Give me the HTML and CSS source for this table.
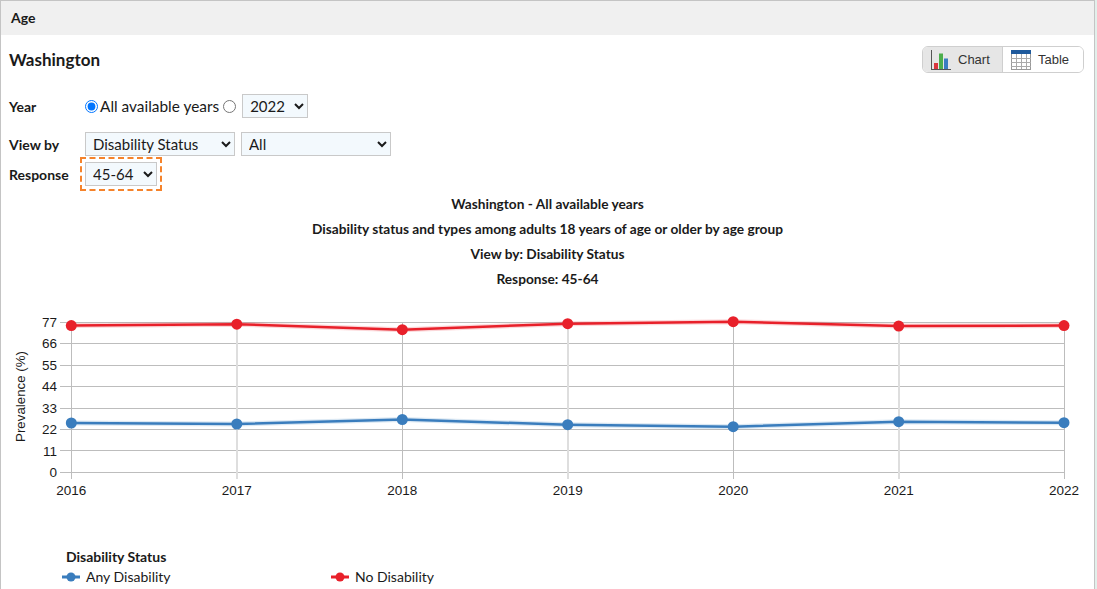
FILE: index.html
```html
<!DOCTYPE html>
<html lang="en">
<head>
<meta charset="utf-8">
<title>Age - Washington</title>
<link rel="stylesheet" href="styles.css">
</head>
<body>
<div class="panel">
  <div class="panel-head">Age</div>
  <div class="panel-body">
    <div class="title-row">
      <h2 class="loc">Washington</h2>
      <div class="toggle">
        <div class="tg active">
          <svg class="tg-icon" width="20" height="20" viewBox="0 0 20 20">
            <rect x="3" y="13" width="4" height="6" fill="#d9363e"/>
            <rect x="8" y="3.5" width="4" height="15.5" fill="#4cae4c"/>
            <rect x="13" y="8.5" width="4" height="10.5" fill="#3b7dc0"/>
            <line x1="0.5" y1="0" x2="0.5" y2="19.5" stroke="#555" stroke-width="1"/>
            <line x1="0" y1="19.5" x2="20" y2="19.5" stroke="#555" stroke-width="1"/>
          </svg>
          <span>Chart</span>
        </div>
        <div class="tg">
          <svg class="tg-icon" width="20" height="20" viewBox="0 0 20 20">
            <rect x="0.5" y="0.5" width="19" height="19" fill="#fff" stroke="#999"/>
            <rect x="0" y="0" width="20" height="4" fill="#1f5a9c"/>
            <g stroke="#aaa" stroke-width="1">
              <line x1="5.5" y1="4" x2="5.5" y2="19"/>
              <line x1="10.5" y1="4" x2="10.5" y2="19"/>
              <line x1="15.5" y1="4" x2="15.5" y2="19"/>
              <line x1="0" y1="8.5" x2="20" y2="8.5"/>
              <line x1="0" y1="12.5" x2="20" y2="12.5"/>
              <line x1="0" y1="16.5" x2="20" y2="16.5"/>
            </g>
          </svg>
          <span>Table</span>
        </div>
      </div>
    </div>

    <div class="form-row year-row">
      <span class="lbl">Year</span>
      <input type="radio" name="yr" class="rad rad-first" checked>
      <span class="rtext">All available years</span>
      <input type="radio" name="yr" class="rad rad-second">
      <select class="sel sel-year"><option>2022</option></select>
    </div>

    <div class="form-row view-row">
      <span class="lbl">View by</span>
      <select class="sel sel-wide"><option>Disability Status</option></select>
      <select class="sel sel-wide"><option>All</option></select>
    </div>

    <div class="form-row resp-row">
      <span class="lbl">Response</span>
      <select class="sel sel-resp"><option>45-64</option></select>
    </div>

    <div class="chart-titles">
      <div>Washington - All available years</div>
      <div>Disability status and types among adults 18 years of age or older by age group</div>
      <div>View by: Disability Status</div>
      <div>Response: 45-64</div>
    </div>

    <svg class="chart" width="1077" height="200" viewBox="9 300 1077 200">
      <g class="grid-h" stroke="#bdbdbd" stroke-width="1">
        <line x1="60" y1="472.5" x2="1064.5" y2="472.5"/>
        <line x1="60" y1="450.5" x2="1064.5" y2="450.5"/>
        <line x1="60" y1="429.5" x2="1064.5" y2="429.5"/>
        <line x1="60" y1="408.5" x2="1064.5" y2="408.5"/>
        <line x1="60" y1="386.5" x2="1064.5" y2="386.5"/>
        <line x1="60" y1="365.5" x2="1064.5" y2="365.5"/>
        <line x1="60" y1="343.5" x2="1064.5" y2="343.5"/>
        <line x1="60" y1="322.5" x2="1064.5" y2="322.5"/>
      </g>
      <g class="grid-v">
        <line x1="71.5" y1="322" x2="71.5" y2="479" stroke="#bdbdbd" stroke-width="1"/>
        <line x1="237" y1="322" x2="237" y2="479" stroke="#dedede" stroke-width="2"/>
        <line x1="402.5" y1="322" x2="402.5" y2="479" stroke="#bdbdbd" stroke-width="1"/>
        <line x1="568" y1="322" x2="568" y2="479" stroke="#dedede" stroke-width="2"/>
        <line x1="733.5" y1="322" x2="733.5" y2="479" stroke="#bdbdbd" stroke-width="1"/>
        <line x1="899" y1="322" x2="899" y2="479" stroke="#dedede" stroke-width="2"/>
        <line x1="1064.5" y1="322" x2="1064.5" y2="479" stroke="#bdbdbd" stroke-width="1"/>
      </g>
      <g class="ytick">
        <text x="57" y="477">0</text>
        <text x="57" y="455.6">11</text>
        <text x="57" y="434.1">22</text>
        <text x="57" y="412.7">33</text>
        <text x="57" y="391.3">44</text>
        <text x="57" y="369.9">55</text>
        <text x="57" y="348.4">66</text>
        <text x="57" y="327">77</text>
      </g>
      <g class="xtick">
        <text x="71.3" y="495">2016</text>
        <text x="236.8" y="495">2017</text>
        <text x="402.3" y="495">2018</text>
        <text x="567.7" y="495">2019</text>
        <text x="733.2" y="495">2020</text>
        <text x="898.7" y="495">2021</text>
        <text x="1064" y="495">2022</text>
      </g>
      <text class="ytitle" transform="translate(25 396.5) rotate(-90)">Prevalence (%)</text>

      <polyline class="halo" stroke="#e8202a" points="71.3,325.6 236.8,324.2 402.3,329.7 567.7,323.7 733.2,321.7 898.7,326 1064,325.6"/>
      <polyline class="series" stroke="#e8202a" points="71.3,325.6 236.8,324.2 402.3,329.7 567.7,323.7 733.2,321.7 898.7,326 1064,325.6"/>
      <g fill="#e8202a">
        <circle cx="71.3" cy="325.6" r="5.5"/>
        <circle cx="236.8" cy="324.2" r="5.5"/>
        <circle cx="402.3" cy="329.7" r="5.5"/>
        <circle cx="567.7" cy="323.7" r="5.5"/>
        <circle cx="733.2" cy="321.7" r="5.5"/>
        <circle cx="898.7" cy="326" r="5.5"/>
        <circle cx="1064" cy="325.6" r="5.5"/>
      </g>

      <polyline class="halo" stroke="#3a7dbd" points="71.3,423 236.8,424 402.3,419.5 567.7,424.7 733.2,426.7 898.7,421.7 1064,422.7"/>
      <polyline class="series" stroke="#3a7dbd" points="71.3,423 236.8,424 402.3,419.5 567.7,424.7 733.2,426.7 898.7,421.7 1064,422.7"/>
      <g fill="#3a7dbd">
        <circle cx="71.3" cy="423" r="5.5"/>
        <circle cx="236.8" cy="424" r="5.5"/>
        <circle cx="402.3" cy="419.5" r="5.5"/>
        <circle cx="567.7" cy="424.7" r="5.5"/>
        <circle cx="733.2" cy="426.7" r="5.5"/>
        <circle cx="898.7" cy="421.7" r="5.5"/>
        <circle cx="1064" cy="422.7" r="5.5"/>
      </g>
    </svg>

    <div class="legend">
      <div class="legend-title">Disability Status</div>
      <div class="legend-items">
        <div class="legend-item">
          <svg width="18" height="10" viewBox="0 0 18 10"><line x1="0" y1="5" x2="18" y2="5" stroke="#3a7dbd" stroke-width="3"/><circle cx="9" cy="5" r="4.5" fill="#3a7dbd"/></svg>
          <span>Any Disability</span>
        </div>
        <div class="legend-item">
          <svg width="18" height="10" viewBox="0 0 18 10"><line x1="0" y1="5" x2="18" y2="5" stroke="#e8202a" stroke-width="3"/><circle cx="9" cy="5" r="4.5" fill="#e8202a"/></svg>
          <span>No Disability</span>
        </div>
      </div>
    </div>
  </div>
</div>
</body>
</html>
```

FILE: styles.css
```css
html, body {
  margin: 0;
  padding: 0;
}
body {
  background: #e2f0eb;
  font-family: Lato, "Noto Sans", sans-serif;
  color: #1a1a1a;
  overflow: hidden;
}
.panel {
  box-sizing: border-box;
  width: 1095px;
  height: 589px;
  background: #fff;
  border: 1px solid #c4c4c4;
  border-bottom: none;
}
.panel-head {
  height: 34px;
  line-height: 34px;
  background: #f0f0f0;
  padding-left: 10px;
  font-weight: 700;
  font-size: 14px;
}
.panel-body {
  padding: 0 8px;
}
.title-row {
  margin-top: 11px;
  height: 27px;
  display: flex;
  align-items: center;
  justify-content: space-between;
}
.loc {
  margin: 0;
  font-size: 17px;
  font-weight: 700;
}
.toggle {
  display: flex;
  height: 27px;
  box-sizing: border-box;
  border: 1px solid #cfcfcf;
  border-radius: 6px;
  overflow: hidden;
  margin-right: 2px;
}
.tg {
  width: 80px;
  box-sizing: border-box;
  display: flex;
  align-items: center;
  gap: 7px;
  padding-left: 8px;
  font-family: "Liberation Sans", Arial, sans-serif;
  font-size: 13px;
  color: #333;
  background: #fff;
}
.tg.active {
  background: #e6e6e6;
  border-right: 1px solid #cfcfcf;
}
.tg-icon {
  display: block;
  flex: none;
}
.form-row {
  display: flex;
  align-items: center;
  height: 24px;
}
.year-row { margin-top: 21px; }
.view-row { margin-top: 14px; gap: 6px; }
.resp-row { margin-top: 6px; }
.lbl {
  width: 76px;
  flex: none;
  font-weight: 700;
  font-size: 14px;
}
.view-row .lbl { margin-right: -6px; }
.rad {
  margin: 0;
  width: 13px;
  height: 13px;
}
.rad-first { margin-right: 2px; }
.rad-second { margin-left: 4px; }
.rtext {
  font-size: 15.4px;
}
.sel {
  box-sizing: border-box;
  height: 24px;
  font-family: Lato, "Noto Sans", sans-serif;
  font-size: 15px;
  color: #1a1a1a;
  background-color: #f3f9fd;
  border: 1px solid #c9c9c9;
  border-radius: 0;
  padding: 0 2px 0 3px;
}
.sel-year {
  width: 66px;
  margin-left: 6px;
}
.sel-wide { width: 150px; }
.sel-resp {
  width: 72px;
  outline: 2px dashed #f5832b;
  outline-offset: 3px;
}
.chart-titles {
  margin-top: 5px;
  text-align: center;
  font-weight: 700;
  font-size: 13.7px;
  line-height: 25px;
}
.chart {
  display: block;
  margin-top: 9px;
}
.chart text {
  font-family: "Liberation Sans", Arial, sans-serif;
  font-size: 13.5px;
  fill: #1a1a1a;
}
.ytick text { text-anchor: end; }
.xtick text { text-anchor: middle; }
.chart .ytitle {
  text-anchor: middle;
  font-size: 13.3px;
}
.series {
  fill: none;
  stroke-width: 2.5;
  stroke-linejoin: round;
}
.halo {
  fill: none;
  stroke-width: 5;
  stroke-opacity: 0.18;
}
.legend {
  margin-top: 47px;
  font-size: 14px;
  line-height: 20px;
}
.legend-title {
  margin-left: 57px;
  font-weight: 700;
}
.legend-items {
  display: flex;
  margin-left: 53px;
}
.legend-item {
  width: 269px;
  display: flex;
  align-items: center;
  gap: 6px;
}
.legend-item svg { display: block; }
```
